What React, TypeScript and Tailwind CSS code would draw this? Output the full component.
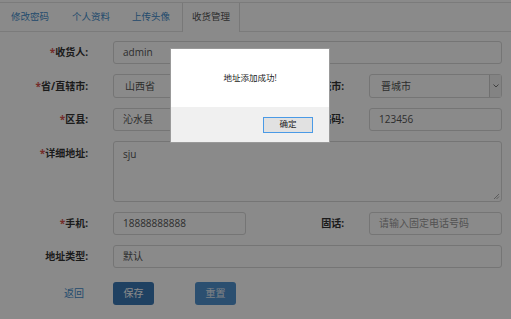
import React from "react";

const font = { fontFamily: '"Open Sans", "Noto Sans CJK SC", sans-serif' };

const Label = ({ text, req, w = "w-[88px]" }: { text: string; req?: boolean; w?: string }) => (
  <div className={`${w} shrink-0 text-right text-[10px] font-bold text-[#333]`}>
    {req && <span className="text-[#d9534f]">*</span>}
    {text}
  </div>
);

const Input = ({ value, placeholder, w = "w-[389px]" }: { value?: string; placeholder?: string; w?: string }) => (
  <div
    className={`${w} flex h-[23px] shrink-0 items-center rounded-[3px] border border-[#d8d8d8] bg-white pl-[9px] text-[10px] ${
      value ? "text-[#555]" : "text-[#999]"
    }`}
  >
    {value || placeholder}
  </div>
);

const Select = ({ value, w }: { value: string; w: string }) => (
  <div
    className={`${w} flex h-[24px] shrink-0 items-center justify-between rounded-[3px] border border-[#d8d8d8] bg-white pl-[11px] text-[10px] text-[#555]`}
  >
    {value}
    <div className="flex h-full w-[12px] items-center justify-center border-l border-[#cfcfcf] bg-[#f2f2f2]">
      <svg width="6" height="4" viewBox="0 0 6 4">
        <path d="M0.5 0.5 L3 3 L5.5 0.5" fill="none" stroke="#777" strokeWidth="1" />
      </svg>
    </div>
  </div>
);

export default function App() {
  const tabs = [
    { t: "修改密码", w: "w-[61px]" },
    { t: "个人资料", w: "w-[60px]" },
    { t: "上传头像", w: "w-[50px]" },
  ];
  return (
    <div className="relative h-[319px] w-[511px] overflow-hidden bg-white" style={font}>
      {/* tabs */}
      <div className="mt-[2px] flex h-[30px] border-t border-b border-[#e4e4e4] pl-[11px]">
        {tabs.map((t) => (
          <div key={t.t} className={`${t.w} flex items-center text-[9.5px] text-[#428bca]`}>
            {t.t}
          </div>
        ))}
        <div className="-mb-px flex w-[58px] items-center justify-center border-x border-[#dedede] bg-white text-[9.5px] text-[#555]">
          收货管理
        </div>
      </div>

      {/* form */}
      <div className="flex flex-col gap-[10px] pt-[9px]">
        <div className="flex items-center gap-[25px]">
          <Label text="收货人:" req />
          <Input value="admin" />
        </div>
        <div className="flex items-center">
          <Label text="省/直辖市:" req />
          <div className="w-[25px]" />
          <Select value="山西省" w="w-[133px]" />
          <Label text="城市:" w="w-[98px]" />
          <div className="w-[25px]" />
          <Select value="晋城市" w="w-[133px]" />
        </div>
        <div className="flex items-center">
          <Label text="区县:" req />
          <div className="w-[25px]" />
          <Input value="沁水县" w="w-[133px]" />
          <Label text="邮政编码:" w="w-[98px]" />
          <div className="w-[25px]" />
          <Input value="123456" w="w-[133px]" />
        </div>
        <div className="flex items-start gap-[25px]">
          <div className="pt-[5px]">
            <Label text="详细地址:" req />
          </div>
          <div className="relative h-[61px] w-[389px] rounded-[3px] border border-[#d8d8d8] bg-white pl-[9px] pt-[5px] text-[10px] text-[#555]">
            sju
            <svg className="absolute bottom-[1px] right-[1px]" width="7" height="7" viewBox="0 0 7 7">
              <path d="M6 1 L1 6 M6 3.5 L3.5 6" stroke="#aaa" strokeWidth="1" />
            </svg>
          </div>
        </div>
        <div className="flex items-center">
          <Label text="手机:" req />
          <div className="w-[25px]" />
          <Input value="18888888888" w="w-[133px]" />
          <Label text="固话:" w="w-[98px]" />
          <div className="w-[25px]" />
          <Input placeholder="请输入固定电话号码" w="w-[133px]" />
        </div>
        <div className="flex items-center gap-[25px]">
          <Label text="地址类型:" />
          <Input value="默认" />
        </div>
        <div className="mt-[4px] flex items-center">
          <div className="w-[84px] shrink-0 text-right text-[10px] text-[#428bca]">返回</div>
          <div className="w-[29px]" />
          <div className="flex h-[23px] w-[41px] items-center justify-center rounded-[3px] bg-[#3a78b5] text-[10px] text-white">
            保存
          </div>
          <div className="w-[41px]" />
          <div className="flex h-[23px] w-[41px] items-center justify-center rounded-[3px] bg-[#5092cf] text-[10px] text-[#e8eef5]">
            重置
          </div>
        </div>
      </div>

      {/* mask */}
      <div className="absolute inset-0 bg-black/[0.46]" />

      {/* dialog */}
      <div className="absolute left-[170px] top-[48px] flex h-[95px] w-[160px] flex-col border border-[#999] bg-white">
        <div className="flex h-[58px] items-center justify-center pt-[1px] text-[8.5px] text-[#222]">地址添加成功!</div>
        <div className="flex flex-1 items-center justify-end bg-[#f0f0f0] pr-[16px]">
          <div className="flex h-[16px] w-[50px] items-center justify-center border border-[#4a9ae6] bg-[#e1e1e1] text-[8.5px] text-[#222]">
            确定
          </div>
        </div>
      </div>
    </div>
  );
}
